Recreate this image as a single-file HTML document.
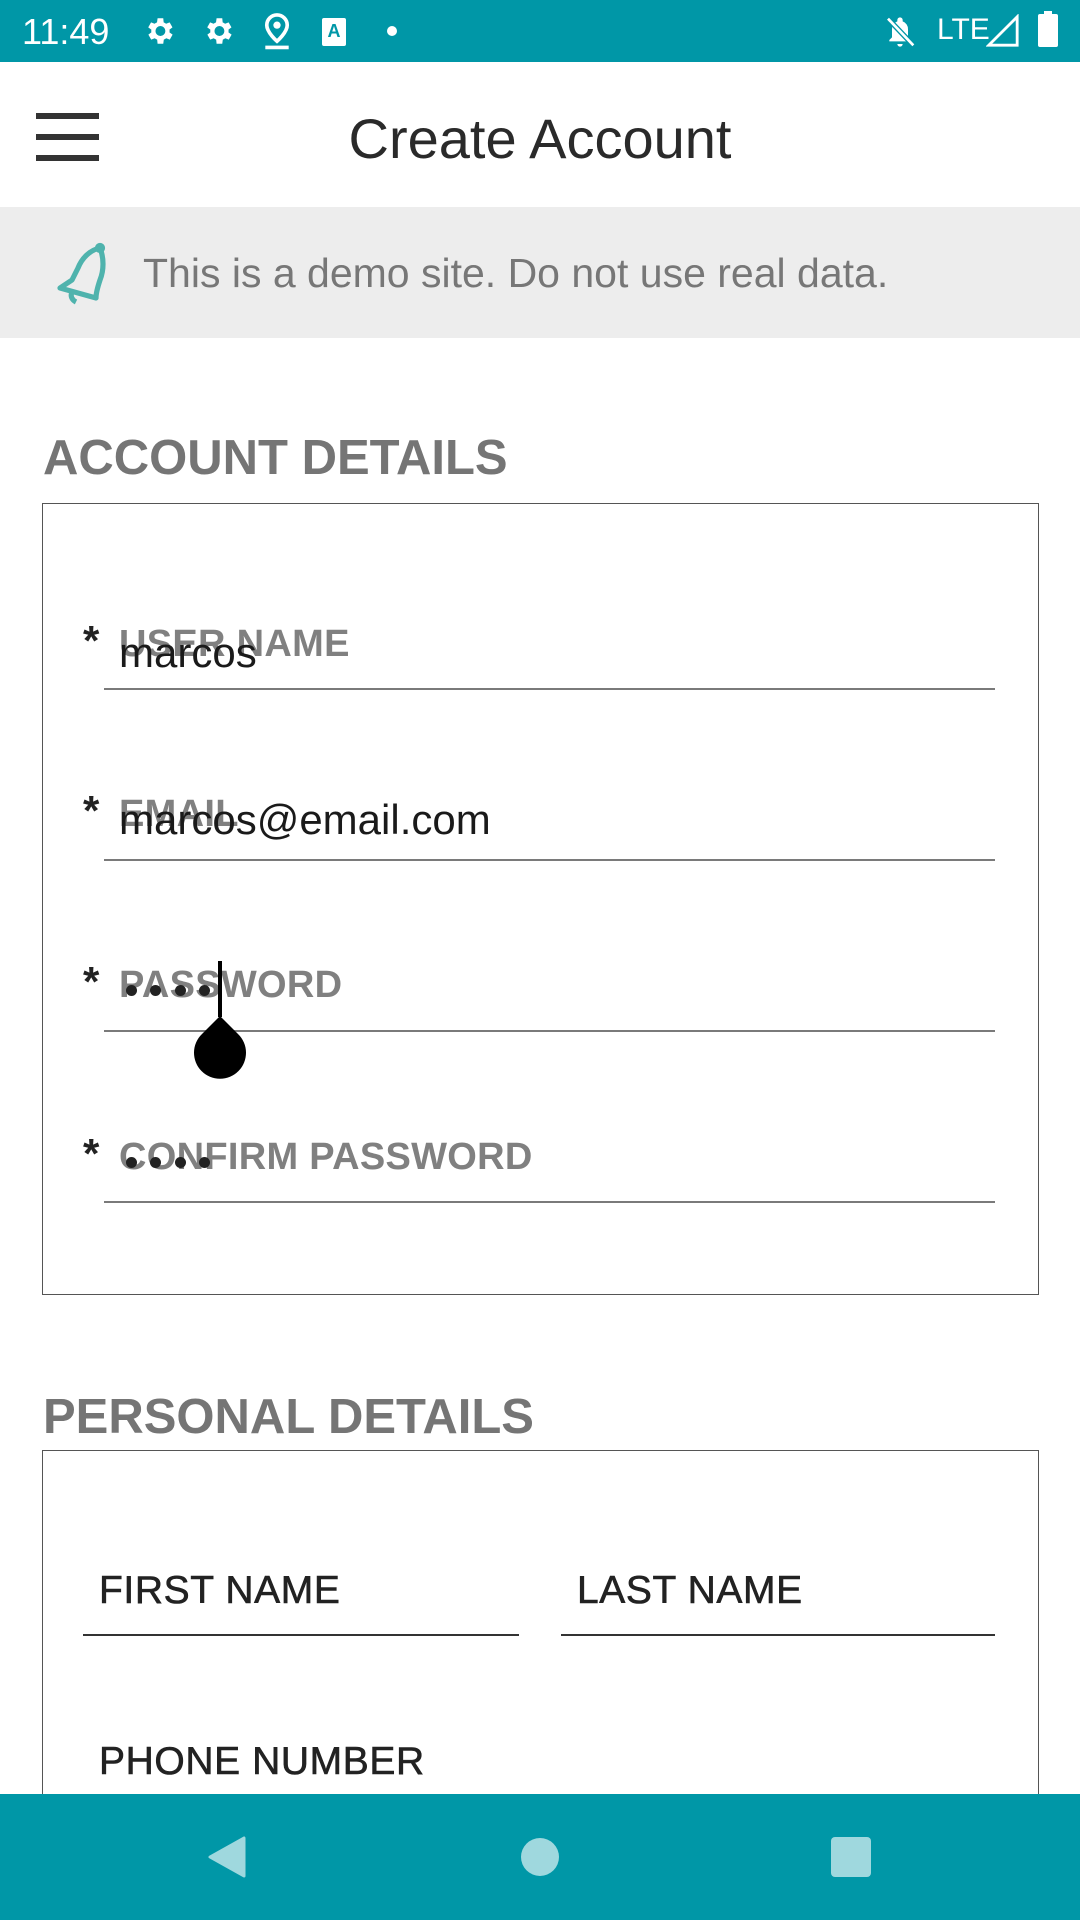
<!DOCTYPE html>
<html style="width:1080px;height:1920px;overflow:hidden"><head><meta charset="utf-8"><style>
*{margin:0;padding:0;box-sizing:border-box}
body{width:1080px;height:1920px;position:relative;overflow:hidden;background:#fff;font-family:"Liberation Sans",sans-serif}
.a{position:absolute}
.t{position:absolute;white-space:nowrap;line-height:1}
.lbl{font-size:38px;color:#808080;font-weight:bold;letter-spacing:0.3px}
.val{font-size:42px;color:#1a1a1a}
.ast{font-size:42px;color:#222;font-weight:bold}
.ul{position:absolute;left:104px;width:891px;height:2px;background:#7a7a7a}
.dot{position:absolute;width:11px;height:11px;border-radius:50%;background:#222}
.pl{font-size:39px;color:#222;letter-spacing:0.6px;-webkit-text-stroke:0.6px #222}
</style></head><body>
<!-- status bar -->
<div class="a" style="left:0;top:0;width:1080px;height:62px;background:#0097a7"></div>
<div class="t" style="left:22px;top:14px;font-size:36px;color:#fff">11:49</div>
<svg class="a" style="left:142px;top:14px" width="34" height="34" viewBox="0 0 24 24"><path fill="#fff" d="M19.4 13a7.5 7.5 0 000-2l2.1-1.6-2-3.5-2.5 1a7 7 0 00-1.7-1L15 3h-4l-.4 2.9a7 7 0 00-1.7 1l-2.5-1-2 3.5L6.6 11a7.5 7.5 0 000 2l-2.1 1.6 2 3.5 2.5-1a7 7 0 001.7 1L11 21h4l.4-2.9a7 7 0 001.7-1l2.5 1 2-3.5zM13 15.5a3.5 3.5 0 110-7 3.5 3.5 0 010 7z"/></svg>
<svg class="a" style="left:201px;top:14px" width="34" height="34" viewBox="0 0 24 24"><path fill="#fff" d="M19.4 13a7.5 7.5 0 000-2l2.1-1.6-2-3.5-2.5 1a7 7 0 00-1.7-1L15 3h-4l-.4 2.9a7 7 0 00-1.7 1l-2.5-1-2 3.5L6.6 11a7.5 7.5 0 000 2l-2.1 1.6 2 3.5 2.5-1a7 7 0 001.7 1L11 21h4l.4-2.9a7 7 0 001.7-1l2.5 1 2-3.5zM13 15.5a3.5 3.5 0 110-7 3.5 3.5 0 010 7z"/></svg>
<svg class="a" style="left:262px;top:12px" width="30" height="38" viewBox="0 0 20 26"><path fill="none" stroke="#fff" stroke-width="2.5" d="M10 2a7 7 0 00-7 7c0 5 7 11 7 11s7-6 7-11a7 7 0 00-7-7z"/><circle cx="10" cy="9" r="2.5" fill="#fff"/><rect x="2" y="23" width="16" height="2.5" fill="#fff"/></svg>
<div class="a" style="left:322px;top:18px;width:24px;height:28px;background:#fff;border-radius:2px;color:#0097a7;font-size:18px;font-weight:bold;text-align:center;line-height:26px">A</div>
<div class="a" style="left:387px;top:26px;width:10px;height:10px;border-radius:50%;background:#fff"></div>
<svg class="a" style="left:884px;top:14px" width="32" height="36" viewBox="0 0 24 26"><path fill="#fff" d="M12 2a2 2 0 00-2 2v1a6 6 0 00-4 6v6l-2 2v1h16v-1l-2-2v-6a6 6 0 00-4-6V4a2 2 0 00-2-2zM10 22a2 2 0 004 0z"/><path stroke="#0097a7" stroke-width="4" d="M3 3l19 20"/><path stroke="#fff" stroke-width="2" d="M3 3l19 20"/></svg>
<div class="t" style="left:937px;top:15px;font-size:30px;color:#fff">LTE</div>
<svg class="a" style="left:986px;top:14px" width="34" height="34" viewBox="0 0 24 24"><path fill="none" stroke="#fff" stroke-width="2" d="M22 2v20H2z"/></svg>
<div class="a" style="left:1038px;top:14px;width:20px;height:33px;background:#fff;border-radius:2px"></div>
<div class="a" style="left:1044px;top:11px;width:8px;height:4px;background:#fff"></div>

<!-- header -->
<div class="a" style="left:36px;top:113px;width:63px;height:6px;background:#333"></div>
<div class="a" style="left:36px;top:134px;width:63px;height:6px;background:#333"></div>
<div class="a" style="left:36px;top:155px;width:63px;height:6px;background:#333"></div>
<div class="t" style="left:0;width:1080px;text-align:center;top:111px;font-size:56px;color:#2a2a2a">Create Account</div>

<!-- banner -->
<div class="a" style="left:0;top:207px;width:1080px;height:131px;background:#ededed"></div>
<svg class="a" style="left:54px;top:242px" width="56" height="64" viewBox="0 0 28 32"><path fill="none" stroke="#4fb3ad" stroke-width="2.6" stroke-linejoin="round" d="M23 3c-5 1-9 5-11 10l-3 6-6 4 18 5c0-3 1-6 2-9 2-5 2-11 0-16zM9 25c-1 2 0 4 2 5" /><circle cx="23" cy="3" r="1.8" fill="none" stroke="#4fb3ad" stroke-width="1.5"/></svg>
<div class="t" style="left:143px;top:253px;font-size:41px;color:#777">This is a demo site. Do not use real data.</div>

<!-- account details -->
<div class="t" style="left:43px;top:434px;font-size:49px;color:#757575;font-weight:bold">ACCOUNT DETAILS</div>
<div class="a" style="left:42px;top:503px;width:997px;height:792px;border:1.5px solid #555"></div>

<div class="t ast" style="left:83px;top:620px">*</div>
<div class="t lbl" style="left:119px;top:625px">USER NAME</div>
<div class="t val" style="left:119px;top:632px">marcos</div>
<div class="ul" style="top:688px"></div>

<div class="t ast" style="left:83px;top:790px">*</div>
<div class="t lbl" style="left:119px;top:795px">EMAIL</div>
<div class="t val" style="left:119px;top:799px">marcos@email.com</div>
<div class="ul" style="top:859px"></div>

<div class="t ast" style="left:83px;top:961px">*</div>
<div class="t lbl" style="left:119px;top:966px">PASSWORD</div>
<div class="dot" style="left:126px;top:985px"></div><div class="dot" style="left:150px;top:985px"></div><div class="dot" style="left:175px;top:985px"></div><div class="dot" style="left:199px;top:985px"></div>
<div class="ul" style="top:1030px"></div>
<div class="a" style="left:218px;top:961px;width:4px;height:56px;background:#000"></div>
<svg class="a" style="left:193px;top:1014px" width="54" height="66" viewBox="0 0 54 66"><path d="M27 2L45 20a26 26 0 11-36 0z" fill="#000"/></svg>

<div class="t ast" style="left:83px;top:1133px">*</div>
<div class="t lbl" style="left:119px;top:1138px">CONFIRM PASSWORD</div>
<div class="dot" style="left:126px;top:1157px"></div><div class="dot" style="left:150px;top:1157px"></div><div class="dot" style="left:175px;top:1157px"></div><div class="dot" style="left:199px;top:1157px"></div>
<div class="ul" style="top:1201px"></div>

<!-- personal details -->
<div class="t" style="left:43px;top:1393px;font-size:49px;color:#757575;font-weight:bold">PERSONAL DETAILS</div>
<div class="a" style="left:42px;top:1450px;width:997px;height:470px;border:1.5px solid #555;border-bottom:none"></div>
<div class="t pl" style="left:99px;top:1571px">FIRST NAME</div>
<div class="a" style="left:83px;top:1634px;width:436px;height:2px;background:#333"></div>
<div class="t pl" style="left:577px;top:1571px">LAST NAME</div>
<div class="a" style="left:561px;top:1634px;width:434px;height:2px;background:#333"></div>
<div class="t pl" style="left:99px;top:1742px">PHONE NUMBER</div>

<!-- nav bar -->
<div class="a" style="left:0;top:1794px;width:1080px;height:126px;background:#0097a7"></div>
<svg class="a" style="left:206px;top:1835px" width="42" height="44" viewBox="0 0 42 44"><path d="M38 3v38L4 22z" fill="#9fd8de" stroke="#9fd8de" stroke-width="3" stroke-linejoin="round"/></svg>
<div class="a" style="left:521px;top:1838px;width:38px;height:38px;border-radius:50%;background:#9fd8de"></div>
<div class="a" style="left:831px;top:1837px;width:40px;height:40px;border-radius:4px;background:#9fd8de"></div>
</body></html>
